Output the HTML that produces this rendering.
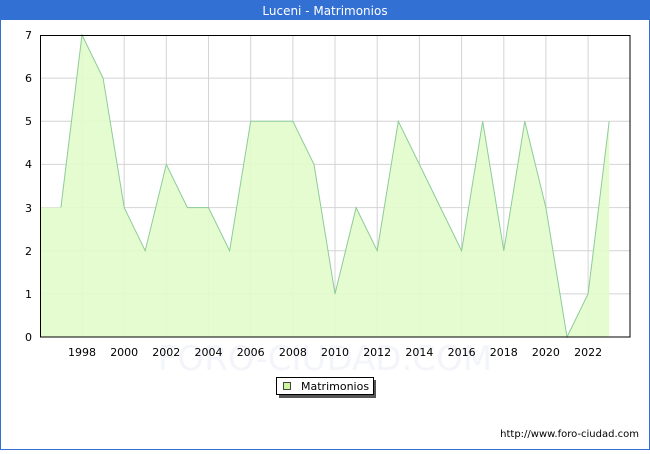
<!DOCTYPE html>
<html><head><meta charset="utf-8"><style>
body{margin:0;width:650px;height:450px;overflow:hidden;background:#fff;font-family:"DejaVu Sans","Liberation Sans",sans-serif;}
</style></head><body>
<svg width="650" height="450" viewBox="0 0 650 450" xmlns="http://www.w3.org/2000/svg" font-family="DejaVu Sans, Liberation Sans, sans-serif">
<rect x="0" y="0" width="650" height="450" fill="#3370d4"/>
<rect x="1" y="20" width="648" height="429" fill="#fff"/>
<text x="325" y="15" font-size="12" fill="#fff" text-anchor="middle">Luceni - Matrimonios</text>
<text x="325" y="370" font-size="34" fill="#f3f5fb" text-anchor="middle">FORO-CIUDAD.COM</text>
<g stroke="#d4d4d4" stroke-width="1">
<line x1="40" y1="293.9" x2="630" y2="293.9"/><line x1="40" y1="250.7" x2="630" y2="250.7"/><line x1="40" y1="207.6" x2="630" y2="207.6"/><line x1="40" y1="164.4" x2="630" y2="164.4"/><line x1="40" y1="121.3" x2="630" y2="121.3"/><line x1="40" y1="78.1" x2="630" y2="78.1"/>
<line x1="82" y1="35" x2="82" y2="337"/><line x1="124.2" y1="35" x2="124.2" y2="337"/><line x1="166.3" y1="35" x2="166.3" y2="337"/><line x1="208.5" y1="35" x2="208.5" y2="337"/><line x1="250.7" y1="35" x2="250.7" y2="337"/><line x1="292.9" y1="35" x2="292.9" y2="337"/><line x1="335" y1="35" x2="335" y2="337"/><line x1="377.2" y1="35" x2="377.2" y2="337"/><line x1="419.4" y1="35" x2="419.4" y2="337"/><line x1="461.6" y1="35" x2="461.6" y2="337"/><line x1="503.8" y1="35" x2="503.8" y2="337"/><line x1="545.9" y1="35" x2="545.9" y2="337"/><line x1="588.1" y1="35" x2="588.1" y2="337"/>
</g>
<polygon fill="#e2fccc" fill-opacity="0.9" points="40,337 40,207.6 60.9,207.6 82,35 103.1,78.1 124.2,207.6 145.2,250.7 166.3,164.4 187.4,207.6 208.5,207.6 229.6,250.7 250.7,121.3 271.8,121.3 292.9,121.3 314,164.4 335,293.9 356.1,207.6 377.2,250.7 398.3,121.3 419.4,164.4 440.5,207.6 461.6,250.7 482.7,121.3 503.8,250.7 524.8,121.3 545.9,207.6 567,337 588.1,293.9 609.2,121.3 609.2,337"/>
<polyline fill="none" stroke="#8ccc98" stroke-width="1" points="60.9,207.6 82,35 103.1,78.1 124.2,207.6 145.2,250.7 166.3,164.4 187.4,207.6 208.5,207.6 229.6,250.7 250.7,121.3 271.8,121.3 292.9,121.3 314,164.4 335,293.9 356.1,207.6 377.2,250.7 398.3,121.3 419.4,164.4 440.5,207.6 461.6,250.7 482.7,121.3 503.8,250.7 524.8,121.3 545.9,207.6 567,337 588.1,293.9 609.2,121.3"/>
<rect x="40.5" y="35.5" width="589.5" height="301.5" fill="none" stroke="#000" stroke-width="1"/>
<g font-size="11" fill="#000" text-anchor="end">
<text x="32" y="341">0</text><text x="32" y="298">1</text><text x="32" y="255">2</text><text x="32" y="212">3</text><text x="32" y="168">4</text><text x="32" y="125">5</text><text x="32" y="82">6</text><text x="32" y="39">7</text>
</g>
<g font-size="11" fill="#000" text-anchor="middle">
<text x="82" y="356">1998</text><text x="124.2" y="356">2000</text><text x="166.3" y="356">2002</text><text x="208.5" y="356">2004</text><text x="250.7" y="356">2006</text><text x="292.9" y="356">2008</text><text x="335" y="356">2010</text><text x="377.2" y="356">2012</text><text x="419.4" y="356">2014</text><text x="461.6" y="356">2016</text><text x="503.8" y="356">2018</text><text x="545.9" y="356">2020</text><text x="588.1" y="356">2022</text>
</g>
<rect x="279" y="380" width="97" height="18" fill="#555"/>
<rect x="276.5" y="377.5" width="97" height="17" fill="#fff" stroke="#000" stroke-width="1"/>
<rect x="283.5" y="382.5" width="7" height="7" fill="#ccf5a0" stroke="#444" stroke-width="1"/>
<text x="301" y="390" font-size="11" fill="#000">Matrimonios</text>
<text x="639" y="437" font-size="10" fill="#000" text-anchor="end">http://www.foro-ciudad.com</text>
</svg>
</body></html>
